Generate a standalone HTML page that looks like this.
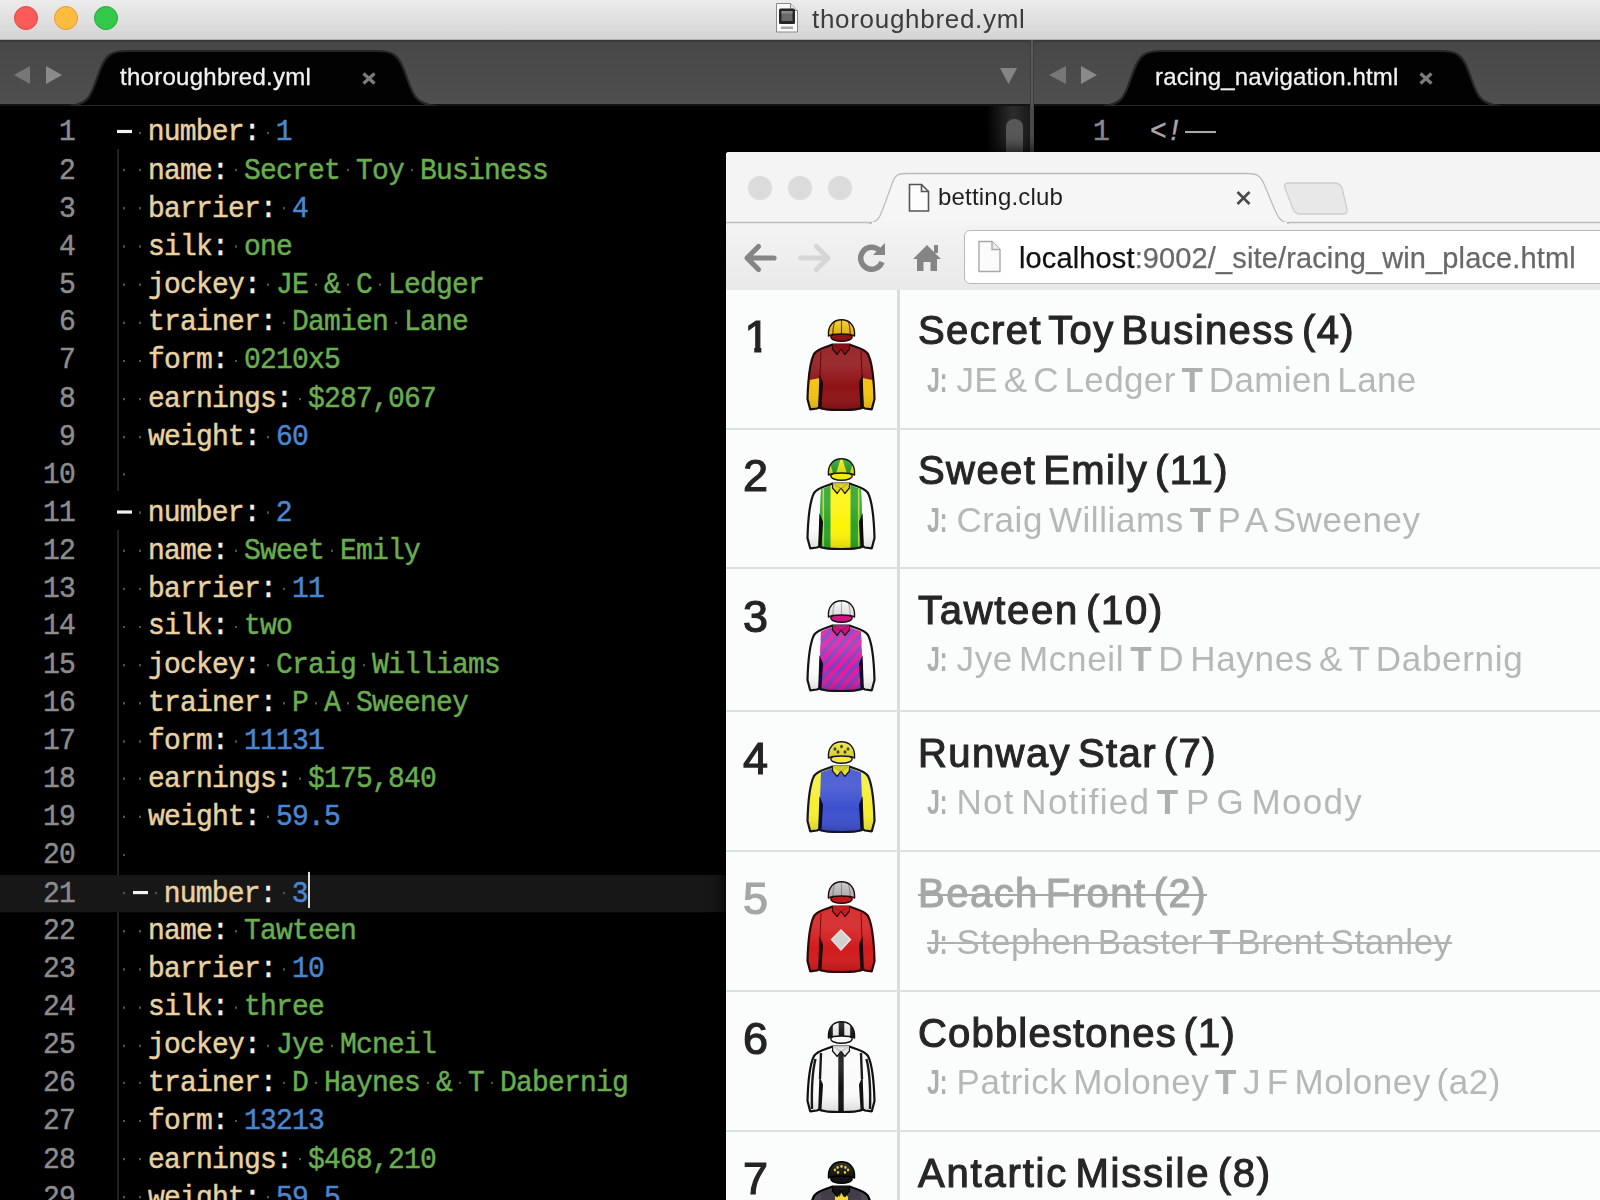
<!DOCTYPE html>
<html>
<head>
<meta charset="utf-8">
<title>thoroughbred.yml</title>
<style>
*{box-sizing:border-box;margin:0;padding:0}
html,body{width:1600px;height:1200px;overflow:hidden;background:#000;font-family:"Liberation Sans",sans-serif}
#titlebar,#tabbar,#browser{will-change:transform}
#titlebar{position:absolute;left:0;top:0;width:1600px;height:40px;background:linear-gradient(#ececec,#d4d4d4);border-bottom:1px solid #b1b1b1}
.tl{position:absolute;top:6px;width:24px;height:24px;border-radius:50%}
#titletext{position:absolute;left:812px;top:3px;letter-spacing:.7px;font-size:26px;line-height:32px;color:#3c3c3c;white-space:nowrap}
#fileicon{position:absolute;left:774px;top:2px}
#tabbar{position:absolute;left:0;top:40px;width:1600px;height:66px;background:#4b4b4b}
#tabbar svg{position:absolute;left:0;top:0}
.tabtxt{position:absolute;color:#f2f2f2;font-size:24px;line-height:30px;white-space:nowrap;-webkit-text-stroke:.3px}
#editor{position:absolute;left:0;top:106px;width:1600px;height:1094px;background:#000}
#code{position:absolute;left:0;top:7.5px;width:1000px;font-family:"Liberation Mono",monospace;font-size:28px;letter-spacing:-0.803px;line-height:35.887px;transform:scaleY(1.06);transform-origin:0 0;-webkit-text-stroke:.45px}
.ln{height:35.887px;position:relative}
.dash{display:inline-block;width:15px;margin-right:1px;height:2.8px;background:#f2f2f2;vertical-align:middle;margin-top:-2px;margin-left:.8px;margin-right:0}
.ln.cur{background:#171717;width:726px}
.no{position:absolute;left:0;width:75px;text-align:right;color:#8c8c8c}
.cd{position:absolute;left:116px;white-space:pre}
.cd i{display:inline-block;width:16px;height:4px;vertical-align:middle;font-size:0;background:radial-gradient(circle at 8px 2px,#505050 0,#505050 .9px,transparent 1.5px)}
.k{color:#e8d2a0}.w{color:#f4f4f4}.s{color:#69ad4f}.n{color:#4b86d2}
.caret{display:inline-block;width:2px;height:34px;background:#ddd;vertical-align:middle;margin-top:-6px}
.guide{position:absolute;left:117px;width:1.5px;background:#212121}
#rcode{position:absolute;left:1033px;top:7.5px;font-family:"Liberation Mono",monospace;font-size:28px;letter-spacing:-0.803px;line-height:35.887px;white-space:pre;transform:scaleY(1.06);transform-origin:0 0;-webkit-text-stroke:.45px}
#browser{position:absolute;left:726px;top:152px;width:880px;height:1060px;background:#fbfdfd;border-radius:3px 0 0 0;overflow:hidden;box-shadow:0 0 14px 4px rgba(0,0,0,.7)}
#chrometop{position:absolute;left:0;top:0;width:880px;height:71px;background:#f4f4f4}
#toolbar{position:absolute;left:0;top:70px;width:880px;height:68px;background:linear-gradient(#f4f4f4,#e9e9e9)}
#urlbox{position:absolute;left:238px;top:78px;width:700px;height:54px;border:1.5px solid #b9b9b9;border-radius:6px;background:#fff}
#urltext{position:absolute;left:293px;top:88px;letter-spacing:.13px;font-size:29px;line-height:36px;white-space:nowrap;color:#686868;-webkit-text-stroke:.25px}
#urltext span{color:#111}
#btabtxt{position:absolute;left:212px;top:30px;letter-spacing:.2px;font-size:24px;line-height:30px;color:#1f1f1f;white-space:nowrap}
#content{position:absolute;left:0;top:138px;width:880px;height:930px;background:#fbfdfd}
#vdiv{position:absolute;left:171px;top:0;width:3px;height:930px;background:#d9dcdc}
.row{position:absolute;left:0;width:880px;height:140px;border-bottom:2.5px solid #dde0e0}
.num{position:absolute;left:17px;top:20px;font-size:45px;line-height:52px;color:#242424;-webkit-text-stroke:1.2px}
.silk{position:absolute;left:80px;top:27px}
.info{position:absolute;left:192px;top:0}
.nm{position:absolute;left:0;top:14px;font-size:40px;word-spacing:-5.6px;line-height:50px;color:#262626;white-space:nowrap;-webkit-text-stroke:1.1px #262626}
.jt{position:absolute;left:9px;top:66px;font-size:35px;word-spacing:-4.4px;line-height:48px;color:#b6b8b8;white-space:nowrap}
.jt b{color:#adafaf}
.jj{position:absolute;left:0;top:0;transform:scaleX(.66);transform-origin:0 0;letter-spacing:0}
.jr{position:absolute;left:29.5px;top:0}
.scr .num{color:#a5a7a7}
.scr .nm{color:#a5a7a7;-webkit-text-stroke:1.1px #a5a7a7}
.scr .nm span,.scr .jt span{text-decoration:line-through;text-decoration-thickness:2.3px}
.scr .jj span{padding-right:22px}
.scr .jt{color:#b0b2b2}
</style>
</head>
<body>
<svg width="0" height="0" style="position:absolute">
<defs>
<linearGradient id="shade" x1="0" y1="0" x2="0" y2="1"><stop offset="0" stop-color="#fff" stop-opacity=".1"/><stop offset=".3" stop-color="#fff" stop-opacity=".12"/><stop offset=".65" stop-color="#fff" stop-opacity="0"/><stop offset="1" stop-color="#000" stop-opacity=".14"/></linearGradient>
<linearGradient id="capshade" x1="0" y1="0" x2="0" y2="1"><stop offset="0" stop-color="#fff" stop-opacity=".15"/><stop offset="1" stop-color="#000" stop-opacity=".12"/></linearGradient>

<symbol id="s1" viewBox="0 0 70 92"><clipPath id="s1t"><path d="M15 31.500 C20 29.500 25 28 27 26.500 L43 26.500 C45 28 50 29.500 55 31.500 L56 58 L57.500 88.500 C50 92 20 92 12.500 88.500 L14 58 Z"/></clipPath><clipPath id="s1d"><path d="M20.500 17 C19.500 6 27 0.800 35.500 0.800 C44 0.800 51.500 6 50.500 17 C46 14.300 25 14.300 20.500 17 Z"/></clipPath><path d="M26.500 25.500 L43.500 25.500 C50 28.500 58 29.500 62 35 C66 43 68 62 68.500 80 L65.800 90.300 L59 89.500 L57 88.500 C50 92 20 92 13 88.500 L11 89.500 L4.200 90.300 L1.500 80 C2 62 4 43 8 35 C12 29.500 20 28.500 26.500 25.500 Z" fill="#8e1114"/><path d="M3.400 61 L13.800 59 L12.500 88.800 L11 89.500 L4.200 90.300 L1.500 80 Z" fill="#f2c313"/><path d="M66.600 61 L56.200 59 L57.500 88.800 L59 89.500 L65.800 90.300 L68.500 80 Z" fill="#f2c313"/><path d="M15 31.500 C20 29.500 25 28 27 26.500 L43 26.500 C45 28 50 29.500 55 31.500 L56 58 L57.500 88.500 C50 92 20 92 12.500 88.500 L14 58 Z" fill="#8e1114"/><path d="M26.500 25.500 L43.500 25.500 C50 28.500 58 29.500 62 35 C66 43 68 62 68.500 80 L65.800 90.300 L59 89.500 L57 88.500 C50 92 20 92 13 88.500 L11 89.500 L4.200 90.300 L1.500 80 C2 62 4 43 8 35 C12 29.500 20 28.500 26.500 25.500 Z" fill="url(#shade)"/><path d="M13.400 55 L17 63.500 L15.500 88 L12.200 88.800 Z" fill="#160808"/><path d="M56.600 55 L53 63.500 L54.500 88 L57.800 88.800 Z" fill="#160808"/><path d="M15 32 L14 58 M55 32 L56 58" stroke="#5c0a0c" stroke-width="1" fill="none"/><path d="M26.500 25.500 L43.500 25.500 C50 28.500 58 29.500 62 35 C66 43 68 62 68.500 80 L65.800 90.300 L59 89.500 L57 88.500 C50 92 20 92 13 88.500 L11 89.500 L4.200 90.300 L1.500 80 C2 62 4 43 8 35 C12 29.500 20 28.500 26.500 25.500 Z" fill="none" stroke="#1b0d0d" stroke-width="2.200" stroke-linejoin="round"/><path d="M26.800 25.500 L35 30 L31.200 35.500 L26.500 30 Z M43.200 25.500 L35 30 L38.800 35.500 L43.500 30 Z" fill="#8e1114" stroke="#1b0d0d" stroke-width="1.200" stroke-linejoin="round"/><path d="M27 25 L43 25 L43 27.500 L35 30.500 L27 27.500Z" fill="#8e1114" opacity=".85"/><g transform="translate(35.5 0) scale(.87 1) translate(-35.5 0)"><ellipse cx="35.500" cy="18" rx="12.300" ry="4.300" fill="#8e1114" stroke="#1b0d0d" stroke-width="1.500"/><path d="M20.500 17 C19.500 6 27 0.800 35.500 0.800 C44 0.800 51.500 6 50.500 17 C46 14.300 25 14.300 20.500 17 Z" fill="#f3cb15"/><g clip-path="url(#s1d)"><path d="M35.500 0 L35.500 17 M28 2 C26 6 25.500 11 25.500 17 M43 2 C45 6 45.500 11 45.500 17" stroke="#8e1114" stroke-width="1.300" fill="none"/></g><path d="M20.500 17 C19.500 6 27 0.800 35.500 0.800 C44 0.800 51.500 6 50.500 17 C46 14.300 25 14.300 20.500 17 Z" fill="url(#capshade)"/><path d="M20.500 17 C19.500 6 27 0.800 35.500 0.800 C44 0.800 51.500 6 50.500 17 C46 14.300 25 14.300 20.500 17 Z" fill="none" stroke="#1b0d0d" stroke-width="1.600" stroke-linejoin="round"/></g></symbol>
<symbol id="s2" viewBox="0 0 70 92"><clipPath id="s2t"><path d="M15 31.500 C20 29.500 25 28 27 26.500 L43 26.500 C45 28 50 29.500 55 31.500 L56 58 L57.500 88.500 C50 92 20 92 12.500 88.500 L14 58 Z"/></clipPath><clipPath id="s2d"><path d="M20.500 17 C19.500 6 27 0.800 35.500 0.800 C44 0.800 51.500 6 50.500 17 C46 14.300 25 14.300 20.500 17 Z"/></clipPath><path d="M26.500 25.500 L43.500 25.500 C50 28.500 58 29.500 62 35 C66 43 68 62 68.500 80 L65.800 90.300 L59 89.500 L57 88.500 C50 92 20 92 13 88.500 L11 89.500 L4.200 90.300 L1.500 80 C2 62 4 43 8 35 C12 29.500 20 28.500 26.500 25.500 Z" fill="#fbfbfb"/><path d="M15 31.500 C20 29.500 25 28 27 26.500 L43 26.500 C45 28 50 29.500 55 31.500 L56 58 L57.500 88.500 C50 92 20 92 12.500 88.500 L14 58 Z" fill="#2aa22c"/><g clip-path="url(#s2t)"><rect x="10" y="20" width="50" height="75" fill="#2aa22c"/><rect x="24.500" y="20" width="20" height="75" fill="#fdf408"/><rect x="16.500" y="20" width="1.600" height="75" fill="#b9d832"/><rect x="51.900" y="20" width="1.600" height="75" fill="#b9d832"/></g><path d="M26.500 25.500 L43.500 25.500 C50 28.500 58 29.500 62 35 C66 43 68 62 68.500 80 L65.800 90.300 L59 89.500 L57 88.500 C50 92 20 92 13 88.500 L11 89.500 L4.200 90.300 L1.500 80 C2 62 4 43 8 35 C12 29.500 20 28.500 26.500 25.500 Z" fill="url(#shade)"/><path d="M13.400 55 L17 63.500 L15.500 88 L12.200 88.800 Z" fill="#0b0b0b"/><path d="M56.600 55 L53 63.500 L54.500 88 L57.800 88.800 Z" fill="#0b0b0b"/><path d="M26.500 25.500 L43.500 25.500 C50 28.500 58 29.500 62 35 C66 43 68 62 68.500 80 L65.800 90.300 L59 89.500 L57 88.500 C50 92 20 92 13 88.500 L11 89.500 L4.200 90.300 L1.500 80 C2 62 4 43 8 35 C12 29.500 20 28.500 26.500 25.500 Z" fill="none" stroke="#141414" stroke-width="2.200" stroke-linejoin="round"/><path d="M26.800 25.500 L35 30 L31.200 35.500 L26.500 30 Z M43.200 25.500 L35 30 L38.800 35.500 L43.500 30 Z" fill="#e3d51d" stroke="#141414" stroke-width="1.200" stroke-linejoin="round"/><path d="M27 25 L43 25 L43 27.500 L35 30.500 L27 27.500Z" fill="#e3d51d" opacity=".85"/><g transform="translate(35.5 0) scale(.87 1) translate(-35.5 0)"><ellipse cx="35.500" cy="18" rx="12.300" ry="4.300" fill="#f3ea14" stroke="#141414" stroke-width="1.500"/><path d="M20.500 17 C19.500 6 27 0.800 35.500 0.800 C44 0.800 51.500 6 50.500 17 C46 14.300 25 14.300 20.500 17 Z" fill="#2aa22c"/><g clip-path="url(#s2d)"><path d="M35.500 -2 L29 16 L42 16Z" fill="#f6ee12"/><path d="M22 4 L20 16 L26 16 Z M49 4 L51 16 L45 16Z" fill="#f6ee12"/></g><path d="M20.500 17 C19.500 6 27 0.800 35.500 0.800 C44 0.800 51.500 6 50.500 17 C46 14.300 25 14.300 20.500 17 Z" fill="url(#capshade)"/><path d="M20.500 17 C19.500 6 27 0.800 35.500 0.800 C44 0.800 51.500 6 50.500 17 C46 14.300 25 14.300 20.500 17 Z" fill="none" stroke="#141414" stroke-width="1.600" stroke-linejoin="round"/></g></symbol>
<symbol id="s3" viewBox="0 0 70 92"><clipPath id="s3t"><path d="M15 31.500 C20 29.500 25 28 27 26.500 L43 26.500 C45 28 50 29.500 55 31.500 L56 58 L57.500 88.500 C50 92 20 92 12.500 88.500 L14 58 Z"/></clipPath><clipPath id="s3d"><path d="M20.500 17 C19.500 6 27 0.800 35.500 0.800 C44 0.800 51.500 6 50.500 17 C46 14.300 25 14.300 20.500 17 Z"/></clipPath><path d="M26.500 25.500 L43.500 25.500 C50 28.500 58 29.500 62 35 C66 43 68 62 68.500 80 L65.800 90.300 L59 89.500 L57 88.500 C50 92 20 92 13 88.500 L11 89.500 L4.200 90.300 L1.500 80 C2 62 4 43 8 35 C12 29.500 20 28.500 26.500 25.500 Z" fill="#fbfbfb"/><path d="M15 31.500 C20 29.500 25 28 27 26.500 L43 26.500 C45 28 50 29.500 55 31.500 L56 58 L57.500 88.500 C50 92 20 92 12.500 88.500 L14 58 Z" fill="#7a3fc0"/><g clip-path="url(#s3t)"><path d="M-52 100 L18 20" stroke="#e3199f" stroke-width="4.600"/><path d="M-41 100 L29 20" stroke="#e3199f" stroke-width="4.600"/><path d="M-30 100 L40 20" stroke="#e3199f" stroke-width="4.600"/><path d="M-19 100 L51 20" stroke="#e3199f" stroke-width="4.600"/><path d="M-8 100 L62 20" stroke="#e3199f" stroke-width="4.600"/><path d="M3 100 L73 20" stroke="#e3199f" stroke-width="4.600"/><path d="M14 100 L84 20" stroke="#e3199f" stroke-width="4.600"/><path d="M25 100 L95 20" stroke="#e3199f" stroke-width="4.600"/><path d="M36 100 L106 20" stroke="#e3199f" stroke-width="4.600"/><path d="M47 100 L117 20" stroke="#e3199f" stroke-width="4.600"/><path d="M58 100 L128 20" stroke="#e3199f" stroke-width="4.600"/><path d="M69 100 L139 20" stroke="#e3199f" stroke-width="4.600"/></g><path d="M26.500 25.500 L43.500 25.500 C50 28.500 58 29.500 62 35 C66 43 68 62 68.500 80 L65.800 90.300 L59 89.500 L57 88.500 C50 92 20 92 13 88.500 L11 89.500 L4.200 90.300 L1.500 80 C2 62 4 43 8 35 C12 29.500 20 28.500 26.500 25.500 Z" fill="url(#shade)"/><path d="M13.400 55 L17 63.500 L15.500 88 L12.200 88.800 Z" fill="#12082a"/><path d="M56.600 55 L53 63.500 L54.500 88 L57.800 88.800 Z" fill="#12082a"/><path d="M26.500 25.500 L43.500 25.500 C50 28.500 58 29.500 62 35 C66 43 68 62 68.500 80 L65.800 90.300 L59 89.500 L57 88.500 C50 92 20 92 13 88.500 L11 89.500 L4.200 90.300 L1.500 80 C2 62 4 43 8 35 C12 29.500 20 28.500 26.500 25.500 Z" fill="none" stroke="#141414" stroke-width="2.200" stroke-linejoin="round"/><path d="M26.800 25.500 L35 30 L31.200 35.500 L26.500 30 Z M43.200 25.500 L35 30 L38.800 35.500 L43.500 30 Z" fill="#c8147f" stroke="#141414" stroke-width="1.200" stroke-linejoin="round"/><path d="M27 25 L43 25 L43 27.500 L35 30.500 L27 27.500Z" fill="#c8147f" opacity=".85"/><g transform="translate(35.5 0) scale(.87 1) translate(-35.5 0)"><ellipse cx="35.500" cy="18" rx="12.300" ry="4.300" fill="#d01582" stroke="#141414" stroke-width="1.500"/><path d="M20.500 17 C19.500 6 27 0.800 35.500 0.800 C44 0.800 51.500 6 50.500 17 C46 14.300 25 14.300 20.500 17 Z" fill="#fbfbfb"/><g clip-path="url(#s3d)"><path d="M35.500 0 L35.500 17 M28 2 C26 6 25.500 11 25.500 17 M43 2 C45 6 45.500 11 45.500 17" stroke="#b9a9b9" stroke-width="1.300" fill="none"/></g><path d="M20.500 17 C19.500 6 27 0.800 35.500 0.800 C44 0.800 51.500 6 50.500 17 C46 14.300 25 14.300 20.500 17 Z" fill="url(#capshade)"/><path d="M20.500 17 C19.500 6 27 0.800 35.500 0.800 C44 0.800 51.500 6 50.500 17 C46 14.300 25 14.300 20.500 17 Z" fill="none" stroke="#141414" stroke-width="1.600" stroke-linejoin="round"/></g></symbol>
<symbol id="s4" viewBox="0 0 70 92"><clipPath id="s4t"><path d="M15 31.500 C20 29.500 25 28 27 26.500 L43 26.500 C45 28 50 29.500 55 31.500 L56 58 L57.500 88.500 C50 92 20 92 12.500 88.500 L14 58 Z"/></clipPath><clipPath id="s4d"><path d="M20.500 17 C19.500 6 27 0.800 35.500 0.800 C44 0.800 51.500 6 50.500 17 C46 14.300 25 14.300 20.500 17 Z"/></clipPath><path d="M26.500 25.500 L43.500 25.500 C50 28.500 58 29.500 62 35 C66 43 68 62 68.500 80 L65.800 90.300 L59 89.500 L57 88.500 C50 92 20 92 13 88.500 L11 89.500 L4.200 90.300 L1.500 80 C2 62 4 43 8 35 C12 29.500 20 28.500 26.500 25.500 Z" fill="#f6ee2f"/><path d="M15 31.500 C20 29.500 25 28 27 26.500 L43 26.500 C45 28 50 29.500 55 31.500 L56 58 L57.500 88.500 C50 92 20 92 12.500 88.500 L14 58 Z" fill="#3c50cf"/><path d="M26.500 25.500 L43.500 25.500 C50 28.500 58 29.500 62 35 C66 43 68 62 68.500 80 L65.800 90.300 L59 89.500 L57 88.500 C50 92 20 92 13 88.500 L11 89.500 L4.200 90.300 L1.500 80 C2 62 4 43 8 35 C12 29.500 20 28.500 26.500 25.500 Z" fill="url(#shade)"/><path d="M13.400 55 L17 63.500 L15.500 88 L12.200 88.800 Z" fill="#0a0a20"/><path d="M56.600 55 L53 63.500 L54.500 88 L57.800 88.800 Z" fill="#0a0a20"/><path d="M26.500 25.500 L43.500 25.500 C50 28.500 58 29.500 62 35 C66 43 68 62 68.500 80 L65.800 90.300 L59 89.500 L57 88.500 C50 92 20 92 13 88.500 L11 89.500 L4.200 90.300 L1.500 80 C2 62 4 43 8 35 C12 29.500 20 28.500 26.500 25.500 Z" fill="none" stroke="#15152a" stroke-width="2.200" stroke-linejoin="round"/><path d="M26.800 25.500 L35 30 L31.200 35.500 L26.500 30 Z M43.200 25.500 L35 30 L38.800 35.500 L43.500 30 Z" fill="#e9e02a" stroke="#15152a" stroke-width="1.200" stroke-linejoin="round"/><path d="M27 25 L43 25 L43 27.500 L35 30.500 L27 27.500Z" fill="#e9e02a" opacity=".85"/><g transform="translate(35.5 0) scale(.87 1) translate(-35.5 0)"><ellipse cx="35.500" cy="18" rx="12.300" ry="4.300" fill="#f3eb37" stroke="#15152a" stroke-width="1.500"/><path d="M20.500 17 C19.500 6 27 0.800 35.500 0.800 C44 0.800 51.500 6 50.500 17 C46 14.300 25 14.300 20.500 17 Z" fill="#f1e935"/><g clip-path="url(#s4d)"><circle cx="28" cy="8" r="1.700" fill="#3a3a1a"/><circle cx="35.5" cy="5.5" r="1.700" fill="#3a3a1a"/><circle cx="43" cy="8" r="1.700" fill="#3a3a1a"/><circle cx="31.5" cy="11" r="1.700" fill="#3a3a1a"/><circle cx="39.5" cy="11" r="1.700" fill="#3a3a1a"/></g><path d="M20.500 17 C19.500 6 27 0.800 35.500 0.800 C44 0.800 51.500 6 50.500 17 C46 14.300 25 14.300 20.500 17 Z" fill="url(#capshade)"/><path d="M20.500 17 C19.500 6 27 0.800 35.500 0.800 C44 0.800 51.500 6 50.500 17 C46 14.300 25 14.300 20.500 17 Z" fill="none" stroke="#15152a" stroke-width="1.600" stroke-linejoin="round"/></g></symbol>
<symbol id="s5" viewBox="0 0 70 92"><clipPath id="s5t"><path d="M15 31.500 C20 29.500 25 28 27 26.500 L43 26.500 C45 28 50 29.500 55 31.500 L56 58 L57.500 88.500 C50 92 20 92 12.500 88.500 L14 58 Z"/></clipPath><clipPath id="s5d"><path d="M20.500 17 C19.500 6 27 0.800 35.500 0.800 C44 0.800 51.500 6 50.500 17 C46 14.300 25 14.300 20.500 17 Z"/></clipPath><path d="M26.500 25.500 L43.500 25.500 C50 28.500 58 29.500 62 35 C66 43 68 62 68.500 80 L65.800 90.300 L59 89.500 L57 88.500 C50 92 20 92 13 88.500 L11 89.500 L4.200 90.300 L1.500 80 C2 62 4 43 8 35 C12 29.500 20 28.500 26.500 25.500 Z" fill="#d21a1c"/><path d="M15 31.500 C20 29.500 25 28 27 26.500 L43 26.500 C45 28 50 29.500 55 31.500 L56 58 L57.500 88.500 C50 92 20 92 12.500 88.500 L14 58 Z" fill="#d21a1c"/><g clip-path="url(#s5t)"><path d="M35 49 L44.500 58.500 L35 69 L25.500 58.500Z" fill="#cfcfcf" stroke="#f0e6e6" stroke-width="1.300"/></g><path d="M26.500 25.500 L43.500 25.500 C50 28.500 58 29.500 62 35 C66 43 68 62 68.500 80 L65.800 90.300 L59 89.500 L57 88.500 C50 92 20 92 13 88.500 L11 89.500 L4.200 90.300 L1.500 80 C2 62 4 43 8 35 C12 29.500 20 28.500 26.500 25.500 Z" fill="url(#shade)"/><path d="M13.400 55 L17 63.500 L15.500 88 L12.200 88.800 Z" fill="#160808"/><path d="M56.600 55 L53 63.500 L54.500 88 L57.800 88.800 Z" fill="#160808"/><path d="M15 32 L14 58 M55 32 L56 58" stroke="#7a0c0e" stroke-width="1" fill="none"/><path d="M26.500 25.500 L43.500 25.500 C50 28.500 58 29.500 62 35 C66 43 68 62 68.500 80 L65.800 90.300 L59 89.500 L57 88.500 C50 92 20 92 13 88.500 L11 89.500 L4.200 90.300 L1.500 80 C2 62 4 43 8 35 C12 29.500 20 28.500 26.500 25.500 Z" fill="none" stroke="#2a0808" stroke-width="2.200" stroke-linejoin="round"/><path d="M26.800 25.500 L35 30 L31.200 35.500 L26.500 30 Z M43.200 25.500 L35 30 L38.800 35.500 L43.500 30 Z" fill="#d21a1c" stroke="#2a0808" stroke-width="1.200" stroke-linejoin="round"/><path d="M27 25 L43 25 L43 27.500 L35 30.500 L27 27.500Z" fill="#d21a1c" opacity=".85"/><g transform="translate(35.5 0) scale(.87 1) translate(-35.5 0)"><ellipse cx="35.500" cy="18" rx="12.300" ry="4.300" fill="#c0181a" stroke="#2a0808" stroke-width="1.500"/><path d="M20.500 17 C19.500 6 27 0.800 35.500 0.800 C44 0.800 51.500 6 50.500 17 C46 14.300 25 14.300 20.500 17 Z" fill="#c4c4c4"/><g clip-path="url(#s5d)"><path d="M35.500 0 L35.500 17 M28 2 C26 6 25.500 11 25.500 17 M43 2 C45 6 45.500 11 45.500 17" stroke="#8a8a8a" stroke-width="1.300" fill="none"/></g><path d="M20.500 17 C19.500 6 27 0.800 35.500 0.800 C44 0.800 51.500 6 50.500 17 C46 14.300 25 14.300 20.500 17 Z" fill="url(#capshade)"/><path d="M20.500 17 C19.500 6 27 0.800 35.500 0.800 C44 0.800 51.500 6 50.500 17 C46 14.300 25 14.300 20.500 17 Z" fill="none" stroke="#2a0808" stroke-width="1.600" stroke-linejoin="round"/></g></symbol>
<symbol id="s6" viewBox="0 0 70 92"><clipPath id="s6t"><path d="M15 31.500 C20 29.500 25 28 27 26.500 L43 26.500 C45 28 50 29.500 55 31.500 L56 58 L57.500 88.500 C50 92 20 92 12.500 88.500 L14 58 Z"/></clipPath><clipPath id="s6d"><path d="M20.500 17 C19.500 6 27 0.800 35.500 0.800 C44 0.800 51.500 6 50.500 17 C46 14.300 25 14.300 20.500 17 Z"/></clipPath><path d="M26.500 25.500 L43.500 25.500 C50 28.500 58 29.500 62 35 C66 43 68 62 68.500 80 L65.800 90.300 L59 89.500 L57 88.500 C50 92 20 92 13 88.500 L11 89.500 L4.200 90.300 L1.500 80 C2 62 4 43 8 35 C12 29.500 20 28.500 26.500 25.500 Z" fill="#fafafa"/><path d="M15 31.500 C20 29.500 25 28 27 26.500 L43 26.500 C45 28 50 29.500 55 31.500 L56 58 L57.500 88.500 C50 92 20 92 12.500 88.500 L14 58 Z" fill="#fafafa"/><g clip-path="url(#s6t)"><rect x="32.300" y="30" width="5.400" height="65" fill="#111"/></g><path d="M26.500 25.500 L43.500 25.500 C50 28.500 58 29.500 62 35 C66 43 68 62 68.500 80 L65.800 90.300 L59 89.500 L57 88.500 C50 92 20 92 13 88.500 L11 89.500 L4.200 90.300 L1.500 80 C2 62 4 43 8 35 C12 29.500 20 28.500 26.500 25.500 Z" fill="url(#shade)"/><path d="M13.400 55 L17 63.500 L15.500 88 L12.200 88.800 Z" fill="#111"/><path d="M56.600 55 L53 63.500 L54.500 88 L57.800 88.800 Z" fill="#111"/><path d="M26.500 25.500 L43.500 25.500 C50 28.500 58 29.500 62 35 C66 43 68 62 68.500 80 L65.800 90.300 L59 89.500 L57 88.500 C50 92 20 92 13 88.500 L11 89.500 L4.200 90.300 L1.500 80 C2 62 4 43 8 35 C12 29.500 20 28.500 26.500 25.500 Z" fill="none" stroke="#111" stroke-width="2.200" stroke-linejoin="round"/><path d="M9.500 38 C6.500 50 5.500 70 6 88 M60.500 38 C63.500 50 64.500 70 64 88 M15 32 L14 58 M55 32 L56 58" stroke="#1a1a1a" stroke-width="2.400" fill="none"/><path d="M26.800 25.500 L35 30 L31.200 35.500 L26.500 30 Z M43.200 25.500 L35 30 L38.800 35.500 L43.500 30 Z" fill="#e8e8e8" stroke="#111" stroke-width="1.200" stroke-linejoin="round"/><path d="M27 25 L43 25 L43 27.500 L35 30.500 L27 27.500Z" fill="#e8e8e8" opacity=".85"/><g transform="translate(35.5 0) scale(.87 1) translate(-35.5 0)"><ellipse cx="35.500" cy="18" rx="12.300" ry="4.300" fill="#fafafa" stroke="#111" stroke-width="1.500"/><path d="M20.500 17 C19.500 6 27 0.800 35.500 0.800 C44 0.800 51.500 6 50.500 17 C46 14.300 25 14.300 20.500 17 Z" fill="#fafafa"/><g clip-path="url(#s6d)"><rect x="18" y="-2" width="7.5" height="22" fill="#161616"/><rect x="32.3" y="-2" width="6.4" height="22" fill="#161616"/><rect x="45.5" y="-2" width="8" height="22" fill="#161616"/></g><path d="M20.500 17 C19.500 6 27 0.800 35.500 0.800 C44 0.800 51.500 6 50.500 17 C46 14.300 25 14.300 20.500 17 Z" fill="url(#capshade)"/><path d="M20.500 17 C19.500 6 27 0.800 35.500 0.800 C44 0.800 51.500 6 50.500 17 C46 14.300 25 14.300 20.500 17 Z" fill="none" stroke="#111" stroke-width="1.600" stroke-linejoin="round"/></g></symbol>
<symbol id="s7" viewBox="0 0 70 92"><clipPath id="s7t"><path d="M15 31.500 C20 29.500 25 28 27 26.500 L43 26.500 C45 28 50 29.500 55 31.500 L56 58 L57.500 88.500 C50 92 20 92 12.500 88.500 L14 58 Z"/></clipPath><clipPath id="s7d"><path d="M20.500 17 C19.500 6 27 0.800 35.500 0.800 C44 0.800 51.500 6 50.500 17 C46 14.300 25 14.300 20.500 17 Z"/></clipPath><path d="M26.500 25.500 L43.500 25.500 C50 28.500 58 29.500 62 35 C66 43 68 62 68.500 80 L65.800 90.300 L59 89.500 L57 88.500 C50 92 20 92 13 88.500 L11 89.500 L4.200 90.300 L1.500 80 C2 62 4 43 8 35 C12 29.500 20 28.500 26.500 25.500 Z" fill="#3a3340"/><path d="M15 31.500 C20 29.500 25 28 27 26.500 L43 26.500 C45 28 50 29.500 55 31.500 L56 58 L57.500 88.500 C50 92 20 92 12.500 88.500 L14 58 Z" fill="#2b2630"/><g clip-path="url(#s7t)"><path d="M29 36 L31.500 33 L33.500 36 L35.500 32 L37.500 36 L39.500 33 L42 36 L42 48 L29 48Z" fill="#f1d21c"/></g><path d="M26.500 25.500 L43.500 25.500 C50 28.500 58 29.500 62 35 C66 43 68 62 68.500 80 L65.800 90.300 L59 89.500 L57 88.500 C50 92 20 92 13 88.500 L11 89.500 L4.200 90.300 L1.500 80 C2 62 4 43 8 35 C12 29.500 20 28.500 26.500 25.500 Z" fill="url(#shade)"/><path d="M13.400 55 L17 63.500 L15.500 88 L12.200 88.800 Z" fill="#160808"/><path d="M56.600 55 L53 63.500 L54.500 88 L57.800 88.800 Z" fill="#160808"/><path d="M26.500 25.500 L43.500 25.500 C50 28.500 58 29.500 62 35 C66 43 68 62 68.500 80 L65.800 90.300 L59 89.500 L57 88.500 C50 92 20 92 13 88.500 L11 89.500 L4.200 90.300 L1.500 80 C2 62 4 43 8 35 C12 29.500 20 28.500 26.500 25.500 Z" fill="none" stroke="#000" stroke-width="2.200" stroke-linejoin="round"/><path d="M26.800 25.500 L35 30 L31.200 35.500 L26.500 30 Z M43.200 25.500 L35 30 L38.800 35.500 L43.500 30 Z" fill="#131313" stroke="#000" stroke-width="1.200" stroke-linejoin="round"/><path d="M27 25 L43 25 L43 27.500 L35 30.500 L27 27.500Z" fill="#131313" opacity=".85"/><g transform="translate(35.5 0) scale(.87 1) translate(-35.5 0)"><ellipse cx="35.500" cy="18" rx="12.300" ry="4.300" fill="#131313" stroke="#000" stroke-width="1.500"/><path d="M20.500 17 C19.500 6 27 0.800 35.500 0.800 C44 0.800 51.500 6 50.500 17 C46 14.300 25 14.300 20.500 17 Z" fill="#131313"/><g clip-path="url(#s7d)"><circle cx="28" cy="9" r="1.400" fill="#f3d51e"/><circle cx="35.5" cy="5.5" r="1.400" fill="#f3d51e"/><circle cx="43" cy="9" r="1.400" fill="#f3d51e"/><circle cx="31.5" cy="11.5" r="1.400" fill="#f3d51e"/><circle cx="39.5" cy="11.5" r="1.400" fill="#f3d51e"/><circle cx="31" cy="6.5" r="1.400" fill="#f3d51e"/><circle cx="40" cy="6.5" r="1.400" fill="#f3d51e"/></g><path d="M20.500 17 C19.500 6 27 0.800 35.500 0.800 C44 0.800 51.500 6 50.500 17 C46 14.300 25 14.300 20.500 17 Z" fill="url(#capshade)"/><path d="M20.500 17 C19.500 6 27 0.800 35.500 0.800 C44 0.800 51.500 6 50.500 17 C46 14.300 25 14.300 20.500 17 Z" fill="none" stroke="#000" stroke-width="1.600" stroke-linejoin="round"/></g></symbol>
</defs>
</svg>

<div id="titlebar">
  <div class="tl" style="left:14px;background:#fc5b57;border:1px solid #df4744"></div>
  <div class="tl" style="left:54px;background:#fdbc40;border:1px solid #de9f34"></div>
  <div class="tl" style="left:94px;background:#34c84a;border:1px solid #27aa35"></div>
  <svg id="fileicon" width="26" height="32" viewBox="0 0 26 32">
    <path d="M2.5 1.5h14l7 7v21.5h-21z" fill="#fafafa" stroke="#8a8a8a" stroke-width="1"/>
    <path d="M16.5 1.5v7h7" fill="#e6e6e6" stroke="#8a8a8a" stroke-width="1"/>
    <rect x="5" y="6.500" width="16" height="15.500" rx="1.500" fill="#262626"/>
    <rect x="7.500" y="9" width="11" height="10" fill="#6a6a6a"/>
    <rect x="7.500" y="9" width="11" height="2.500" fill="#8a8a8a"/>
    <rect x="7" y="24.500" width="12" height="2.500" fill="#a5a5a5"/>
  </svg>
  <div id="titletext">thoroughbred.yml</div>
</div>

<div id="tabbar">
  <svg width="1600" height="66" viewBox="0 0 1600 66">
    <defs>
      <linearGradient id="tbg" x1="0" y1="0" x2="0" y2="1"><stop offset="0" stop-color="#474747"/><stop offset="1" stop-color="#4f4f4f"/></linearGradient>
    </defs>
    <rect x="0" y="0" width="1600" height="66" fill="url(#tbg)"/>
    <rect x="0" y="0" width="1600" height="2" fill="#3a3a3a"/>
    <rect x="0" y="64" width="1600" height="2" fill="#141414"/>
    <!-- left tab -->
    <path d="M70 66 C92 64 92 50 100 30 C106 14 112 11 128 11 L376 11 C392 11 398 14 404 30 C412 50 412 64 436 66 Z" fill="#020202" stroke="#262626" stroke-width="2.200"/>
    <!-- right tab -->
    <path d="M1104 66 C1126 64 1126 50 1134 30 C1140 14 1146 11 1162 11 L1440 11 C1456 11 1462 14 1468 30 C1476 50 1476 64 1500 66 Z" fill="#020202" stroke="#262626" stroke-width="2.200"/>
    <!-- pane divider -->
    <rect x="1030" y="0" width="4" height="66" fill="#3b3b3b"/>
    <rect x="1031" y="0" width="2" height="66" fill="#5a5a5a"/>
    <!-- arrows -->
    <path d="M30 26 L30 44 L14 35Z" fill="#777"/>
    <path d="M46 26 L46 44 L62 35Z" fill="#8a8a8a"/>
    <path d="M1000 28 L1017 28 L1008.500 44Z" fill="#858585"/>
    <path d="M1066 26 L1066 44 L1049 35Z" fill="#777"/>
    <path d="M1081 26 L1081 44 L1097 35Z" fill="#8a8a8a"/>
    <!-- close x -->
    <path d="M363.500 33.500 L374.500 43.500 M374.500 33.500 L363.500 43.500" stroke="#7c7c7c" stroke-width="3.200"/>
    <path d="M1420.500 33.500 L1431.500 43.500 M1431.500 33.500 L1420.500 43.500" stroke="#7c7c7c" stroke-width="3.200"/>
  </svg>
  <div class="tabtxt" style="left:120px;top:22px;letter-spacing:.27px">thoroughbred.yml</div>
  <div class="tabtxt" style="left:1155px;top:22px;letter-spacing:.15px">racing_navigation.html</div>
</div>

<div id="editor">
  <div class="guide" style="top:43px;height:342px"></div>
  <div class="guide" style="top:424px;height:670px"></div>
  <div id="code">
<div class="ln"><span class="no">1</span><span class="cd"><span class="dash"></span><i>·</i><span class="k">number</span><span class="w">:</span><i>·</i><span class="n">1</span></span></div>
<div class="ln"><span class="no">2</span><span class="cd"><i>·</i><i>·</i><span class="k">name</span><span class="w">:</span><i>·</i><span class="s">Secret<i>·</i>Toy<i>·</i>Business</span></span></div>
<div class="ln"><span class="no">3</span><span class="cd"><i>·</i><i>·</i><span class="k">barrier</span><span class="w">:</span><i>·</i><span class="n">4</span></span></div>
<div class="ln"><span class="no">4</span><span class="cd"><i>·</i><i>·</i><span class="k">silk</span><span class="w">:</span><i>·</i><span class="s">one</span></span></div>
<div class="ln"><span class="no">5</span><span class="cd"><i>·</i><i>·</i><span class="k">jockey</span><span class="w">:</span><i>·</i><span class="s">JE<i>·</i>&amp;<i>·</i>C<i>·</i>Ledger</span></span></div>
<div class="ln"><span class="no">6</span><span class="cd"><i>·</i><i>·</i><span class="k">trainer</span><span class="w">:</span><i>·</i><span class="s">Damien<i>·</i>Lane</span></span></div>
<div class="ln"><span class="no">7</span><span class="cd"><i>·</i><i>·</i><span class="k">form</span><span class="w">:</span><i>·</i><span class="s">0210x5</span></span></div>
<div class="ln"><span class="no">8</span><span class="cd"><i>·</i><i>·</i><span class="k">earnings</span><span class="w">:</span><i>·</i><span class="s">$287,067</span></span></div>
<div class="ln"><span class="no">9</span><span class="cd"><i>·</i><i>·</i><span class="k">weight</span><span class="w">:</span><i>·</i><span class="n">60</span></span></div>
<div class="ln"><span class="no">10</span><span class="cd"><i>··</i></span></div>
<div class="ln"><span class="no">11</span><span class="cd"><span class="dash"></span><i>·</i><span class="k">number</span><span class="w">:</span><i>·</i><span class="n">2</span></span></div>
<div class="ln"><span class="no">12</span><span class="cd"><i>·</i><i>·</i><span class="k">name</span><span class="w">:</span><i>·</i><span class="s">Sweet<i>·</i>Emily</span></span></div>
<div class="ln"><span class="no">13</span><span class="cd"><i>·</i><i>·</i><span class="k">barrier</span><span class="w">:</span><i>·</i><span class="n">11</span></span></div>
<div class="ln"><span class="no">14</span><span class="cd"><i>·</i><i>·</i><span class="k">silk</span><span class="w">:</span><i>·</i><span class="s">two</span></span></div>
<div class="ln"><span class="no">15</span><span class="cd"><i>·</i><i>·</i><span class="k">jockey</span><span class="w">:</span><i>·</i><span class="s">Craig<i>·</i>Williams</span></span></div>
<div class="ln"><span class="no">16</span><span class="cd"><i>·</i><i>·</i><span class="k">trainer</span><span class="w">:</span><i>·</i><span class="s">P<i>·</i>A<i>·</i>Sweeney</span></span></div>
<div class="ln"><span class="no">17</span><span class="cd"><i>·</i><i>·</i><span class="k">form</span><span class="w">:</span><i>·</i><span class="n">11131</span></span></div>
<div class="ln"><span class="no">18</span><span class="cd"><i>·</i><i>·</i><span class="k">earnings</span><span class="w">:</span><i>·</i><span class="s">$175,840</span></span></div>
<div class="ln"><span class="no">19</span><span class="cd"><i>·</i><i>·</i><span class="k">weight</span><span class="w">:</span><i>·</i><span class="n">59.5</span></span></div>
<div class="ln"><span class="no">20</span><span class="cd"><i>··</i></span></div>
<div class="ln cur"><span class="no">21</span><span class="cd"><i>·</i><span class="dash"></span><i>·</i><span class="k">number</span><span class="w">:</span><i>·</i><span class="n">3</span><span class="caret"></span></span></div>
<div class="ln"><span class="no">22</span><span class="cd"><i>·</i><i>·</i><span class="k">name</span><span class="w">:</span><i>·</i><span class="s">Tawteen</span></span></div>
<div class="ln"><span class="no">23</span><span class="cd"><i>·</i><i>·</i><span class="k">barrier</span><span class="w">:</span><i>·</i><span class="n">10</span></span></div>
<div class="ln"><span class="no">24</span><span class="cd"><i>·</i><i>·</i><span class="k">silk</span><span class="w">:</span><i>·</i><span class="s">three</span></span></div>
<div class="ln"><span class="no">25</span><span class="cd"><i>·</i><i>·</i><span class="k">jockey</span><span class="w">:</span><i>·</i><span class="s">Jye<i>·</i>Mcneil</span></span></div>
<div class="ln"><span class="no">26</span><span class="cd"><i>·</i><i>·</i><span class="k">trainer</span><span class="w">:</span><i>·</i><span class="s">D<i>·</i>Haynes<i>·</i>&amp;<i>·</i>T<i>·</i>Dabernig</span></span></div>
<div class="ln"><span class="no">27</span><span class="cd"><i>·</i><i>·</i><span class="k">form</span><span class="w">:</span><i>·</i><span class="n">13213</span></span></div>
<div class="ln"><span class="no">28</span><span class="cd"><i>·</i><i>·</i><span class="k">earnings</span><span class="w">:</span><i>·</i><span class="s">$468,210</span></span></div>
<div class="ln"><span class="no">29</span><span class="cd"><i>·</i><i>·</i><span class="k">weight</span><span class="w">:</span><i>·</i><span class="n">59.5</span></span></div>
  </div>
  <!-- scrollbar of left pane -->
  <div style="position:absolute;left:986px;top:0;width:44px;height:60px;background:linear-gradient(90deg,#000,#2c2c2c 60%,#1a1a1a)"></div>
  <div style="position:absolute;left:1006px;top:13px;width:17px;height:40px;border-radius:8px;background:#585858"></div>
  <div style="position:absolute;left:1030px;top:0;width:4px;height:60px;background:#4a4a4a"></div>
  <div id="rcode"><span style="position:absolute;left:0;width:76px;text-align:right;color:#8c8c8c">1</span><span style="position:absolute;left:117px;color:#a8a8a8;font-style:italic">&lt;!<span style="display:inline-block;width:31px;height:2.6px;background:#a8a8a8;vertical-align:middle;margin-left:3px;margin-top:-1px"></span></span></div>
</div>

<div id="browser">
  <div id="chrometop"></div>
  <div id="toolbar"></div>
  <svg width="880" height="140" viewBox="0 0 880 140" style="position:absolute;left:0;top:0">
    <circle cx="34" cy="36" r="12" fill="#dcdcdc"/>
    <circle cx="74" cy="36" r="12" fill="#dcdcdc"/>
    <circle cx="114" cy="36" r="12" fill="#dcdcdc"/>
    <!-- new tab button -->
    <path d="M563 31 L608 31 Q614 31 616 36 L621 57 Q622 62 617 62 L574 62 Q569 62 567 57 L559 36 Q557 31 563 31Z" fill="#e8e8e8" stroke="#cdcdcd" stroke-width="1.300"/>
    <!-- tab strip bottom line -->
    <path d="M0 70.500 L880 70.500" stroke="#bdbdbd" stroke-width="1.300"/>
    <!-- active tab -->
    <path d="M143 71.500 C153 70 154 64 158 54 L166 32 C169 23 172 21.500 180 21.500 L522 21.500 C530 21.500 534 23 538 32 L548 56 C552 65 554 70 563 71.500" fill="#f6f6f6" stroke="#bdbdbd" stroke-width="1.300"/>
    <rect x="146" y="70" width="415" height="4" fill="#f5f5f5"/>
    <!-- page icon in tab -->
    <path d="M183.500 32.500 h12 l7 7 v19.500 h-19z" fill="#fdfdfd" stroke="#555" stroke-width="1.6"/>
    <path d="M195.500 32.500 v7 h7" fill="none" stroke="#555" stroke-width="1.6"/>
    <!-- tab close -->
    <path d="M511.500 40 L523.500 52 M523.500 40 L511.500 52" stroke="#4a4a4a" stroke-width="2.6"/>
    <!-- back arrow -->
    <path d="M48 106 L22 106 M32.500 94.500 L21 106 L32.500 117.500" fill="none" stroke="#858585" stroke-width="5.200" stroke-linecap="round" stroke-linejoin="round"/>
    <!-- forward arrow -->
    <path d="M75 106 L101 106 M90.500 94.500 L102 106 L90.500 117.500" fill="none" stroke="#d6d6d6" stroke-width="5.200" stroke-linecap="round" stroke-linejoin="round"/>
    <!-- reload -->
    <path d="M153 98 A11 11 0 1 0 156 110" fill="none" stroke="#858585" stroke-width="5.500"/>
    <path d="M147 103 L159 103 L159 91Z" fill="#858585"/>
    <!-- home -->
    <path d="M187 107 L201 93 L215 107 L211 107 L211 119 L204.500 119 L204.500 110 L197.500 110 L197.500 119 L191 119 L191 107Z" fill="#858585"/>
    <rect x="208" y="93" width="4" height="8" fill="#858585"/>
  </svg>
  <div id="btabtxt">betting.club</div>
  <div id="urlbox"></div>
  <svg width="30" height="36" viewBox="0 0 30 36" style="position:absolute;left:250px;top:87px">
    <path d="M3 2.500 h13 l8 8 v22 h-21z" fill="#fbfbfb" stroke="#a9a9a9" stroke-width="1.400"/>
    <path d="M16 2.500 v8 h8" fill="#ececec" stroke="#a9a9a9" stroke-width="1.400"/>
  </svg>
  <div id="urltext"><span>localhost</span>:9002/_site/racing_win_place.html</div>
  <div id="content">
    <div id="vdiv"></div>
<div class="row" style="top:0px;height:139.5px">
  <div class="num" style="top:20.8px;left:18.5px;clip-path:polygon(0 0,100% 0,100% 36.6px,16.8px 36.6px,16.8px 100%,9.8px 100%,9.8px 36.6px,0 36.6px)">1</div>
  <svg class="silk" style="top:28.5px" viewBox="0 0 70 92" width="70" height="92"><use href="#s1"/></svg>
  <div class="info"><div class="nm" style="letter-spacing:1.397px;top:14.5px"><span>Secret Toy Business (4)</span></div><div class="jt" style="letter-spacing:0.368px"><b class="jj"><span>J:</span></b><span class="jr">JE &amp; C Ledger <b>T</b> Damien Lane</span></div></div>
</div>
<div class="row" style="top:139.5px;height:139.5px">
  <div class="num" style="top:20.8px">2</div>
  <svg class="silk" style="top:28.5px" viewBox="0 0 70 92" width="70" height="92"><use href="#s2"/></svg>
  <div class="info"><div class="nm" style="letter-spacing:1.429px;top:15.5px"><span>Sweet Emily (11)</span></div><div class="jt" style="letter-spacing:0.575px"><b class="jj"><span>J:</span></b><span class="jr">Craig Williams <b>T</b> P A Sweeney</span></div></div>
</div>
<div class="row" style="top:279px;height:142.5px">
  <div class="num" style="top:22.2px">3</div>
  <svg class="silk" style="top:31.0px" viewBox="0 0 70 92" width="70" height="92"><use href="#s3"/></svg>
  <div class="info"><div class="nm" style="letter-spacing:1.697px;top:16px"><span>Tawteen (10)</span></div><div class="jt" style="letter-spacing:0.679px"><b class="jj"><span>J:</span></b><span class="jr">Jye Mcneil <b>T</b> D Haynes &amp; T Dabernig</span></div></div>
</div>
<div class="row" style="top:421.5px;height:140.5px">
  <div class="num" style="top:21.2px">4</div>
  <svg class="silk" style="top:29.0px" viewBox="0 0 70 92" width="70" height="92"><use href="#s4"/></svg>
  <div class="info"><div class="nm" style="letter-spacing:1.414px;top:16px"><span>Runway Star (7)</span></div><div class="jt" style="letter-spacing:1.264px"><b class="jj"><span>J:</span></b><span class="jr">Not Notified <b>T</b> P G Moody</span></div></div>
</div>
<div class="row scr" style="top:562px;height:140px">
  <div class="num" style="top:21.0px">5</div>
  <svg class="silk" style="top:28.8px" viewBox="0 0 70 92" width="70" height="92"><use href="#s5"/></svg>
  <div class="info"><div class="nm" style="letter-spacing:1.487px;top:16px"><span>Beach Front (2)</span></div><div class="jt" style="letter-spacing:0.696px"><b class="jj"><span>J:   </span></b><span class="jr">Stephen Baster <b>T</b> Brent Stanley</span></div></div>
</div>
<div class="row" style="top:702px;height:140px">
  <div class="num" style="top:21.0px">6</div>
  <svg class="silk" style="top:28.8px" viewBox="0 0 70 92" width="70" height="92"><use href="#s6"/></svg>
  <div class="info"><div class="nm" style="letter-spacing:1.187px;top:16px"><span>Cobblestones (1)</span></div><div class="jt" style="letter-spacing:0.543px"><b class="jj"><span>J:</span></b><span class="jr">Patrick Moloney <b>T</b> J F Moloney (a2)</span></div></div>
</div>
<div class="row" style="top:842px;height:140px">
  <div class="num" style="top:21.0px">7</div>
  <svg class="silk" style="top:28.8px" viewBox="0 0 70 92" width="70" height="92"><use href="#s7"/></svg>
  <div class="info"><div class="nm" style="letter-spacing:1.813px;top:16px"><span>Antartic Missile (8)</span></div><div class="jt" style="letter-spacing:0.000px"><b class="jj"><span>J:</span></b><span class="jr"> <b>T</b> </span></div></div>
</div>
  </div>
</div>
</body>
</html>
